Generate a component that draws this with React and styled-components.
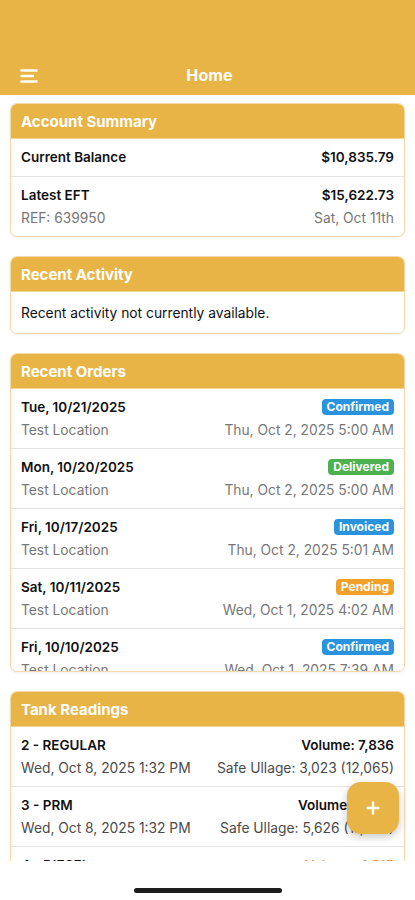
import React from "react";
import styled, { createGlobalStyle } from "styled-components";

const YELLOW = "#E8B446";

const GlobalStyle = createGlobalStyle`
  html, body { margin: 0; padding: 0; background: #fff; }
  body { font-family: Inter, "Noto Sans", "Liberation Sans", sans-serif; -webkit-font-smoothing: antialiased; }
  * { box-sizing: border-box; }
`;

const Screen = styled.div`
  position: relative;
  width: 415px;
  height: 900px;
  display: flex;
  flex-direction: column;
  background: #fff;
  overflow: hidden;
`;

const TopBar = styled.header`
  height: 95px;
  flex-shrink: 0;
  background: ${YELLOW};
  display: grid;
  grid-template-columns: 1fr auto 1fr;
  align-items: center;
  align-content: end;
  padding: 0 16px 0 20px;
  & > * { height: 40px; display: flex; align-items: center; }
`;

const MenuButton = styled.div`
  justify-self: start;
  padding-top: 2px;
`;

const Title = styled.h1`
  margin: 0;
  color: #fff;
  font-size: 16px;
  font-weight: 700;
  letter-spacing: 0.1px;
`;

const Scroll = styled.main`
  height: 766px;
  flex-shrink: 0;
  overflow: hidden;
  padding: 8px 10px 0;
  display: flex;
  flex-direction: column;
  gap: 19px;
`;

const Card = styled.section`
  flex-shrink: 0;
  background: #fff;
  border: 1px solid #F3D9AC;
  border-radius: 7px;
  overflow: hidden;
  box-shadow: 0 1px 3px rgba(0, 0, 0, 0.06);
`;

const CardHeader = styled.div`
  height: 34px;
  background: ${YELLOW};
  color: #fff;
  font-size: 15px;
  font-weight: 700;
  padding: 0 10px;
  display: flex;
  align-items: center;
`;

const CardBody = styled.div`
  max-height: ${(p) => (p.$maxHeight ? `${p.$maxHeight}px` : "none")};
  overflow: hidden;
`;

const Row = styled.div`
  display: flex;
  flex-direction: column;
  gap: 3px;
  padding: ${(p) => (p.$single ? "8px 10px 9px" : "8px 10px")};
  border-top: 1px solid #E4E4E4;
  &:first-child { border-top-color: #F1D593; }
`;

const Line = styled.div`
  height: 20px;
  display: flex;
  align-items: center;
  justify-content: space-between;
  gap: 8px;
`;

const Strong = styled.span`
  font-size: 13.5px;
  font-weight: 600;
  color: ${(p) => p.$color || "#111"};
  white-space: nowrap;
`;

const Sub = styled.span`
  font-size: 13.8px;
  font-weight: 400;
  color: ${(p) => p.$color || "#777"};
  white-space: nowrap;
`;

const Message = styled.p`
  margin: 0;
  padding: 11px 10px 10px;
  line-height: 20px;
  font-size: 13.8px;
  color: #111;
  border-top: 1px solid #F1D593;
`;

const BADGE_COLORS = {
  Confirmed: "#2A93DD",
  Invoiced: "#2A93DD",
  Delivered: "#4DB151",
  Pending: "#F1A02A",
};

const Badge = styled.span`
  display: inline-block;
  height: 16px;
  line-height: 16px;
  padding: 0 5px;
  border-radius: 4px;
  background: ${(p) => BADGE_COLORS[p.$status] || "#999"};
  color: #fff;
  font-size: 12px;
  font-weight: 700;
`;

const BottomSafe = styled.div`
  flex: 1;
  display: flex;
  justify-content: center;
  padding-top: 27px;
`;

const HomeIndicator = styled.div`
  width: 148px;
  height: 5px;
  border-radius: 3px;
  background: #1d1d1d;
`;

const Fab = styled.button`
  position: absolute;
  right: 16px;
  top: 782px;
  width: 52px;
  height: 52px;
  border: none;
  border-radius: 14px;
  background: ${YELLOW};
  box-shadow: 0 3px 8px rgba(0, 0, 0, 0.22);
  display: flex;
  align-items: center;
  justify-content: center;
  padding: 0;
`;

const MenuIcon = () => (
  <svg width="18" height="14" viewBox="0 0 18 14">
    <g stroke="#fff" strokeWidth="2.4" strokeLinecap="round">
      <line x1="1.5" y1="1.5" x2="16.5" y2="1.5" />
      <line x1="1.5" y1="7" x2="13" y2="7" />
      <line x1="1.5" y1="12.5" x2="16.5" y2="12.5" />
    </g>
  </svg>
);

const PlusIcon = () => (
  <svg width="14" height="14" viewBox="0 0 14 14">
    <g stroke="#fff" strokeWidth="2.4" strokeLinecap="round">
      <line x1="7" y1="1.5" x2="7" y2="12.5" />
      <line x1="1.5" y1="7" x2="12.5" y2="7" />
    </g>
  </svg>
);

const orders = [
  { date: "Tue, 10/21/2025", status: "Confirmed", loc: "Test Location", time: "Thu, Oct 2, 2025 5:00 AM" },
  { date: "Mon, 10/20/2025", status: "Delivered", loc: "Test Location", time: "Thu, Oct 2, 2025 5:00 AM" },
  { date: "Fri, 10/17/2025", status: "Invoiced", loc: "Test Location", time: "Thu, Oct 2, 2025 5:01 AM" },
  { date: "Sat, 10/11/2025", status: "Pending", loc: "Test Location", time: "Wed, Oct 1, 2025 4:02 AM" },
  { date: "Fri, 10/10/2025", status: "Confirmed", loc: "Test Location", time: "Wed, Oct 1, 2025 7:39 AM" },
];

const tanks = [
  { name: "2 - REGULAR", volume: "Volume: 7,836", date: "Wed, Oct 8, 2025 1:32 PM", ullage: "Safe Ullage: 3,023 (12,065)" },
  { name: "3 - PRM", volume: "Volume: 4,439", date: "Wed, Oct 8, 2025 1:32 PM", ullage: "Safe Ullage: 5,626 (11,065)" },
  { name: "4 - DIESEL", volume: "Volume: 1,515", date: "Wed, Oct 8, 2025 1:32 PM", ullage: "Safe Ullage: 8,850 (10,365)", low: true },
];

export default function App() {
  return (
    <>
      <GlobalStyle />
      <Screen>
        <TopBar>
          <MenuButton>
            <MenuIcon />
          </MenuButton>
          <Title>Home</Title>
          <div />
        </TopBar>

        <Scroll>
          <Card>
            <CardHeader>Account Summary</CardHeader>
            <CardBody>
              <Row $single>
                <Line>
                  <Strong>Current Balance</Strong>
                  <Strong>$10,835.79</Strong>
                </Line>
              </Row>
              <Row>
                <Line>
                  <Strong>Latest EFT</Strong>
                  <Strong>$15,622.73</Strong>
                </Line>
                <Line>
                  <Sub>REF: 639950</Sub>
                  <Sub>Sat, Oct 11th</Sub>
                </Line>
              </Row>
            </CardBody>
          </Card>

          <Card>
            <CardHeader>Recent Activity</CardHeader>
            <Message>Recent activity not currently available.</Message>
          </Card>

          <Card>
            <CardHeader>Recent Orders</CardHeader>
            <CardBody $maxHeight={283}>
              {orders.map((o, i) => (
                <Row key={i}>
                  <Line>
                    <Strong>{o.date}</Strong>
                    <Badge $status={o.status}>{o.status}</Badge>
                  </Line>
                  <Line>
                    <Sub>{o.loc}</Sub>
                    <Sub>{o.time}</Sub>
                  </Line>
                </Row>
              ))}
            </CardBody>
          </Card>

          <Card>
            <CardHeader>Tank Readings</CardHeader>
            <CardBody>
              {tanks.map((t, i) => (
                <Row key={i}>
                  <Line>
                    <Strong>{t.name}</Strong>
                    <Strong $color={t.low ? "#F2964A" : undefined}>{t.volume}</Strong>
                  </Line>
                  <Line>
                    <Sub $color="#4a4a4a">{t.date}</Sub>
                    <Sub $color="#4a4a4a">{t.ullage}</Sub>
                  </Line>
                </Row>
              ))}
            </CardBody>
          </Card>
        </Scroll>

        <BottomSafe>
          <HomeIndicator />
        </BottomSafe>

        <Fab aria-label="Add">
          <PlusIcon />
        </Fab>
      </Screen>
    </>
  );
}
